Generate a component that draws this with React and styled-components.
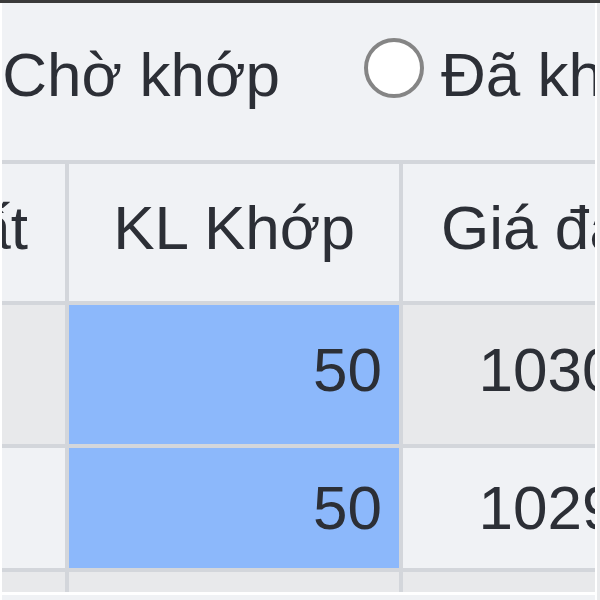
import React from 'react';
import styled, { createGlobalStyle } from 'styled-components';

const Global = createGlobalStyle`
  html, body {
    margin: 0;
    padding: 0;
    background: #e9eaec;
  }
  * {
    box-sizing: border-box;
  }
`;

function App() {
  return (
    <>
      <Global />
      <Page>
        <TopBar />
        <Body>
          <Edge />
          <Panel>
            <FilterBar>
              <Option>
                <Radio />
                <span>Tất cả</span>
              </Option>
              <Option>
                <Radio />
                <span>Chờ khớp</span>
              </Option>
              <Option>
                <Radio />
                <span>Đã khớp</span>
              </Option>
            </FilterBar>
            <Table>
              <Row $h={137} $bg="#f0f2f5">
                <Cell $w={304} $align="right" $pr={37} $pt={28}>Mới nhất</Cell>
                <Cell $w={334} $align="center" $pt={28}>KL Khớp</Cell>
                <Cell $w={280} $align="center" $pt={28}>Giá đặt</Cell>
              </Row>
              <Row $h={139} $bg="#e8e9eb">
                <Cell $w={304} $pt={29} />
                <Cell $w={334} $align="right" $pr={17} $pt={29} $bg="#8cb8fb">50</Cell>
                <Cell $w={280} $align="right" $pr={28} $pt={29}>10300</Cell>
              </Row>
              <Row $h={120} $bg="#f0f2f5">
                <Cell $w={304} $pt={24} />
                <Cell $w={334} $align="right" $pr={17} $pt={24} $bg="#8cb8fb">50</Cell>
                <Cell $w={280} $align="right" $pr={28} $pt={24}>10290</Cell>
              </Row>
              <Row $h={20} $bg="#e8e9eb" $last>
                <Cell $w={304} />
                <Cell $w={334} />
                <Cell $w={280} />
              </Row>
            </Table>
          </Panel>
          <Edge />
        </Body>
      </Page>
    </>
  );
}

export default App;

const Page = styled.div`
  width: 600px;
  height: 600px;
  overflow: hidden;
  display: flex;
  flex-direction: column;
  background: #e9eaec;
  font-family: "Liberation Sans", Arial, sans-serif;
  font-size: 62px;
  line-height: 72px;
  color: #2c2f36;
`;

const TopBar = styled.div`
  height: 3px;
  flex-shrink: 0;
  background: #3a3a3a;
`;

const Body = styled.div`
  flex: 1;
  display: flex;
  min-height: 0;
`;

const Edge = styled.div`
  width: 2px;
  flex-shrink: 0;
  background: #ffffff;
`;

const Panel = styled.div`
  width: 593px;
  flex-shrink: 0;
  overflow: hidden;
  background: #f0f2f5;
`;

const FilterBar = styled.div`
  height: 157px;
  padding-top: 36px;
  margin-left: -410px;
  display: flex;
  align-items: flex-start;
  gap: 84px;
  white-space: nowrap;
`;

const Option = styled.label`
  display: flex;
  align-items: flex-start;
  gap: 17px;
`;

const Radio = styled.span`
  width: 60px;
  height: 60px;
  margin-top: -1px;
  flex-shrink: 0;
  border-radius: 50%;
  border: 4px solid #858585;
  background: #ffffff;
`;

const Table = styled.div`
  margin-left: -237px;
  border-top: 4px solid #d3d6db;
  white-space: nowrap;
`;

const Row = styled.div`
  display: flex;
  height: ${(p) => p.$h}px;
  background: ${(p) => p.$bg};
  border-bottom: ${(p) => (p.$last ? '3px solid #ffffff' : '4px solid #d3d6db')};
  box-sizing: content-box;
`;

const Cell = styled.div`
  width: ${(p) => p.$w}px;
  flex-shrink: 0;
  padding-top: ${(p) => p.$pt || 0}px;
  padding-right: ${(p) => p.$pr || 0}px;
  text-align: ${(p) => p.$align || 'left'};
  background: ${(p) => p.$bg || 'transparent'};
  border-right: 4px solid #d3d6db;
  overflow: hidden;
`;
